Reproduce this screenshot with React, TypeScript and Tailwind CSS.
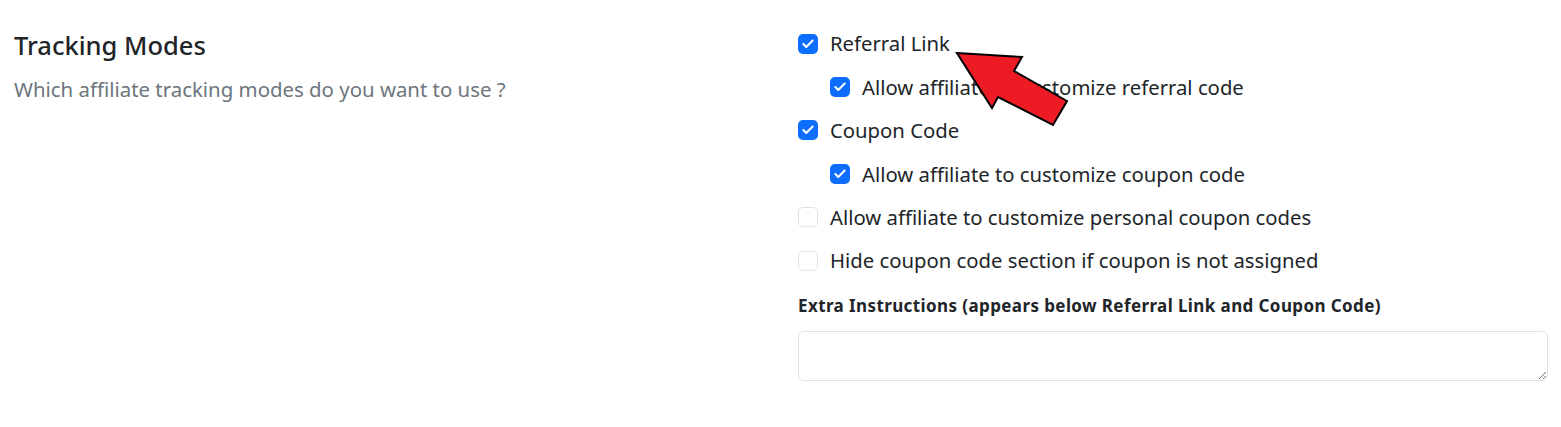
import { Check } from "lucide-react";

const font = { fontFamily: '"Noto Sans", "Open Sans", sans-serif' };

function Box({ checked }: { checked: boolean }) {
  return checked ? (
    <span className="flex h-5 w-5 shrink-0 items-center justify-center rounded-[5px] bg-[#0d6efd]">
      <Check size={14} strokeWidth={3.5} className="text-white" />
    </span>
  ) : (
    <span className="h-5 w-5 shrink-0 rounded-[5px] border border-[#dee2e6] bg-white" />
  );
}

function Option({ label, checked, nested = false }: { label: string; checked: boolean; nested?: boolean }) {
  return (
    <label className={`flex h-[43.4px] items-center gap-3 text-[20.3px] text-[#212529] ${nested ? "pl-8" : ""}`}>
      <Box checked={checked} />
      <span>{label}</span>
    </label>
  );
}

export default function App() {
  return (
    <div className="relative min-h-[427px] bg-white" style={font}>
      <div className="grid grid-cols-[1fr_750px] gap-6 pl-[14px] pr-[13px] pt-[22px]">
        <div>
          <h4 className="pt-[3px] text-[25.5px] font-medium leading-[40px] text-[#212529]">Tracking Modes</h4>
          <p className="mt-[10px] text-[20.4px] leading-[28px] text-[#6c757d]">Which affiliate tracking modes do you want to use ?</p>
        </div>
        <div>
          <Option label="Referral Link" checked />
          <Option label="Allow affiliate to customize referral code" checked nested />
          <Option label="Coupon Code" checked />
          <Option label="Allow affiliate to customize coupon code" checked nested />
          <Option label="Allow affiliate to customize personal coupon codes" checked={false} />
          <Option label="Hide coupon code section if coupon is not assigned" checked={false} />
          <label className="mt-[12px] block text-[17px] font-bold leading-6 tracking-[0.4px] text-[#212529]">
            Extra Instructions (appears below Referral Link and Coupon Code)
          </label>
          <textarea className="mt-[13px] block h-[50px] w-full rounded-md border border-[#dee2e6] px-3 py-1.5 outline-none" />
        </div>
      </div>
      <svg className="pointer-events-none absolute left-0 top-0" width="1561" height="427">
        <polygon
          points="957,53 1022,57 1014,71 1067,101 1053,125 998,97 992,108"
          fill="#ed1c24"
          stroke="#000"
          strokeWidth="2"
          strokeLinejoin="miter"
        />
      </svg>
    </div>
  );
}
